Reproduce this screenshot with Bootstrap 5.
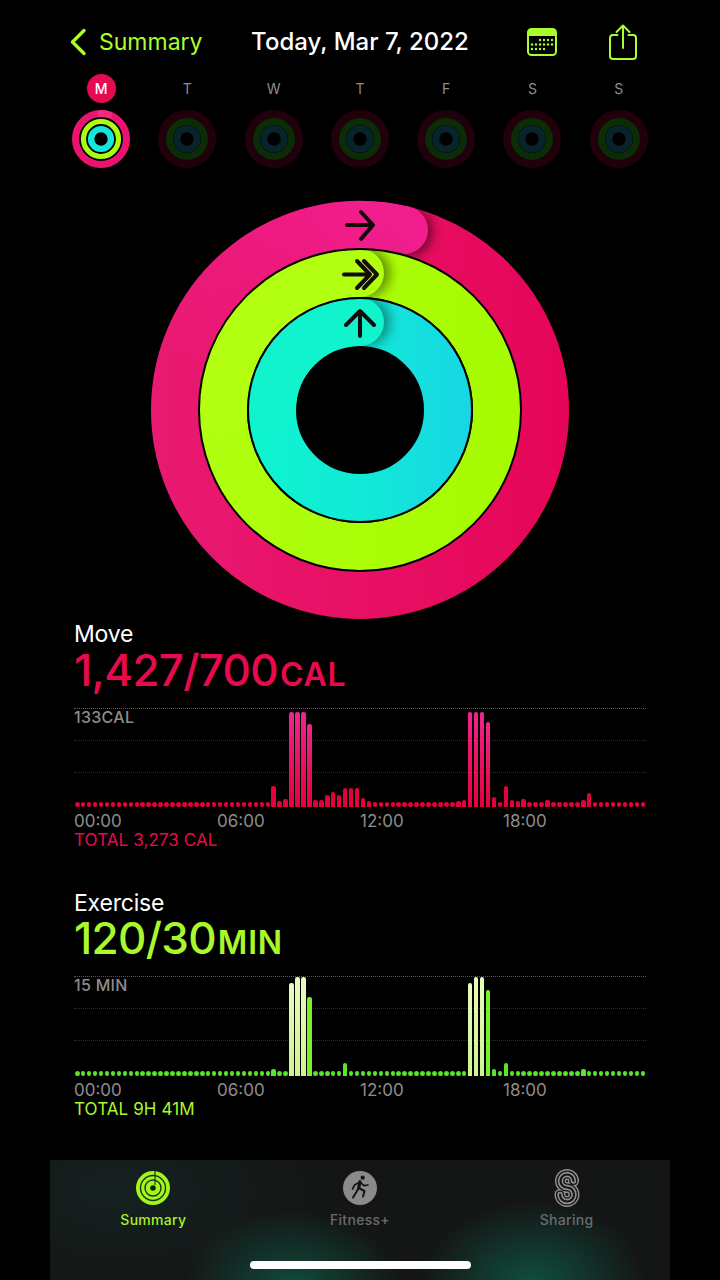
<!DOCTYPE html>
<html lang="en">
<head>
    <meta charset="UTF-8">
    <meta name="viewport" content="width=device-width, initial-scale=1.0">
    <title>Activity</title>
    <link href="https://cdn.jsdelivr.net/npm/bootstrap@5.3.0/dist/css/bootstrap.min.css" rel="stylesheet">
    <style>
        html, body { background: #000; }
        body {
            width: 720px;
            height: 1280px;
            overflow: hidden;
            font-family: Inter, "Liberation Sans", sans-serif;
            color: #fff;
        }
        .screen { height: 1280px; }

        .hdr { height: 44px; margin-top: 20px; padding: 0 69px; }
        .hdr-side { flex: 1 1 0; }
        .hdr-right { gap: 52px; }
        .share-icon { margin-right: 14px; }
        .back-text { font-size: 23px; color: #aaff2a; margin-left: 12px; }
        .hdr-title { font-size: 24px; font-weight: 500; white-space: nowrap; }

        .week { padding: 0 58px; margin-top: 10px; height: 96px; }
        .day-col { width: 86.28px; }
        .day-letter {
            width: 29px; height: 29px; line-height: 29px;
            font-size: 14px; color: #8e8e8e; text-align: center;
            border-radius: 50%;
        }
        .day-letter.today { background: #e60b50; color: #fff; font-weight: 500; }
        .day-ring { margin-top: 6px; }

        .rings-wrap { margin-top: 30px; height: 420px; }

        .stat { padding-left: 74px; }
        .stat-name { font-size: 23px; line-height: 28px; letter-spacing: -.2px; }
        .stat-value { font-size: 44px; font-weight: 500; line-height: 44px; letter-spacing: -.7px; white-space: nowrap; }
        .stat-unit { font-size: 32px; font-weight: 600; letter-spacing: .8px; margin-left: 2px; }
        .move-color { color: #e8094f; }
        .ex-color { color: #a9f82b; }
        .ex-block { margin-top: 40px; }
        .ex-block .stat-name { line-height: 26px; }
        .ex-block .axis { margin-top: 4px; }

        .plot { position: relative; width: 572px; height: 100px; margin-top: 11px; }
        .grid-line { position: absolute; left: 0; right: 0; border-top: 1px dotted #2e2e2e; }
        .grid-line.first { top: 0; border-top-color: #555; }
        .grid-line.second { top: 32px; }
        .grid-line.third { top: 64px; }
        .plot-max { position: absolute; left: 0; top: 0; font-size: 16px; font-weight: 500; line-height: 18px; letter-spacing: .3px; color: #8d8d8d; }
        .bars { position: absolute; inset: 0 0 0 1px; }
        .move-bars { bottom: 1px; }
        .bar { width: 4.500px; border-radius: 2.250px 2.250px 0 0; }
        .bar.dot { border-radius: 50%; height: 5px; }
        .move-bars .bar { background: #e5003c; }
        .move-bars .bar.tall { background: linear-gradient(to top, #e5003c, #f0248e); }
        .ex-bars .bar { background: #55e82a; }
        .ex-bars .bar.tall { background: linear-gradient(to top, #cdf58c, #eafbc0); }
        .ex-bars .bar.bright { background: #78f02a; }

        .axis { width: 572px; font-size: 17px; line-height: 20px; color: #8d8d8d; margin-top: 3px; }
        .stat-total { font-size: 17px; line-height: 19px; letter-spacing: .1px; }

        .tabbar {
            width: 620px;
            height: 120px;
            margin: auto 50px 0;
            background:
                radial-gradient(ellipse 110px 75px at 243px 125px, rgba(14, 90, 70, .78), transparent),
                radial-gradient(ellipse 115px 85px at 483px 125px, rgba(14, 90, 70, .85), transparent),
                radial-gradient(ellipse 220px 110px at 70px 30px, #15211f, transparent),
                #141515;
        }
        .tab-item { padding-top: 11px; }
        .tab-text { font-size: 14px; font-weight: 500; line-height: 18px; letter-spacing: .3px; margin-top: 6px; color: #696c6c; }
        .tab-text.on { color: #a6f02a; }
        .s-icon { margin: -2px 0; }
        .home-bar { width: 221px; height: 8px; border-radius: 4px; background: #fff; margin: 32px auto 0; }
    </style>
</head>
<body>
    <!-- shared day ring -->
    <svg width="0" height="0" class="d-block">
        <defs>
            <symbol id="dayOn" viewBox="-30 -30 60 60">
                <circle r="25" fill="none" stroke="#ea1470" stroke-width="8"/>
                <path d="M0-25A25 25 0 0 1 7-24" fill="none" stroke="#f5287f" stroke-width="8" stroke-linecap="round"/>
                <circle r="17.5" fill="none" stroke="#aaff0e" stroke-width="7"/>
                <circle r="10.2" fill="none" stroke="#14e6dc" stroke-width="7"/>
                <circle r="21" fill="none" stroke="#000" stroke-width="1.800"/>
                <circle r="14" fill="none" stroke="#000" stroke-width="1.800"/>
            </symbol>
            <symbol id="dayOff" viewBox="-30 -30 60 60">
                <circle r="25" fill="none" stroke="#20000b" stroke-width="8"/>
                <circle r="17.5" fill="none" stroke="#0c2c07" stroke-width="7"/>
                <circle r="10.2" fill="none" stroke="#08242b" stroke-width="7"/>
            </symbol>
            <path id="sharePath" d="M23.500 12A6.500 6.500 0 1 0 17 18.500A7 7 0 1 1 10 25.500" fill="none" stroke-linecap="round"/>
        </defs>
    </svg>

    <div class="screen d-flex flex-column">
        <div class="hdr d-flex align-items-center">
            <div class="hdr-side d-flex align-items-center">
                <svg width="18" height="28" viewBox="0 0 18 28"><path d="M15 2.500 3.500 14 15 25.500" fill="none" stroke="#aaff2a" stroke-width="3.400" stroke-linecap="round" stroke-linejoin="round"/></svg>
                <span class="back-text">Summary</span>
            </div>
            <div class="hdr-title">Today, Mar 7, 2022</div>
            <div class="hdr-side hdr-right d-flex align-items-center justify-content-end">
                <svg width="30" height="28" viewBox="0 0 30 28">
                    <rect x="1" y="1" width="28" height="26" rx="3.5" fill="none" stroke="#aaff2a" stroke-width="2"/>
                    <path d="M1 8V4.500A3.500 3.500 0 0 1 4.500 1h21A3.500 3.500 0 0 1 29 4.500V8Z" fill="#aaff2a"/>
                    <g fill="#aaff2a">
                        <circle cx="13" cy="12" r="1.200"/><circle cx="17" cy="12" r="1.200"/><circle cx="21" cy="12" r="1.200"/><circle cx="25" cy="12" r="1.200"/>
                        <circle cx="5" cy="16.500" r="1.200"/><circle cx="9" cy="16.500" r="1.200"/><circle cx="13" cy="16.500" r="1.200"/><circle cx="17" cy="16.500" r="1.200"/><circle cx="21" cy="16.500" r="1.200"/><circle cx="25" cy="16.500" r="1.200"/>
                        <circle cx="5" cy="21" r="1.200"/><circle cx="9" cy="21" r="1.200"/><circle cx="13" cy="21" r="1.200"/><circle cx="17" cy="21" r="1.200"/>
                    </g>
                </svg>
                <svg class="share-icon" width="28" height="36" viewBox="0 0 28 36">
                    <path d="M8.500 11H4a3 3 0 0 0-3 3v18a3 3 0 0 0 3 3h20a3 3 0 0 0 3-3V14a3 3 0 0 0-3-3h-4.500" fill="none" stroke="#aaff2a" stroke-width="2" stroke-linecap="round"/>
                    <path d="M14 24V2M7.500 8 14 1.500 20.500 8" fill="none" stroke="#aaff2a" stroke-width="2" stroke-linecap="round" stroke-linejoin="round"/>
                </svg>
            </div>
        </div>

        <div class="week d-flex">
            <div class="day-col d-flex flex-column align-items-center"><div class="day-letter today">M</div><svg class="day-ring" width="60" height="60"><use href="#dayOn"/></svg></div>
            <div class="day-col d-flex flex-column align-items-center"><div class="day-letter">T</div><svg class="day-ring" width="60" height="60"><use href="#dayOff"/></svg></div>
            <div class="day-col d-flex flex-column align-items-center"><div class="day-letter">W</div><svg class="day-ring" width="60" height="60"><use href="#dayOff"/></svg></div>
            <div class="day-col d-flex flex-column align-items-center"><div class="day-letter">T</div><svg class="day-ring" width="60" height="60"><use href="#dayOff"/></svg></div>
            <div class="day-col d-flex flex-column align-items-center"><div class="day-letter">F</div><svg class="day-ring" width="60" height="60"><use href="#dayOff"/></svg></div>
            <div class="day-col d-flex flex-column align-items-center"><div class="day-letter">S</div><svg class="day-ring" width="60" height="60"><use href="#dayOff"/></svg></div>
            <div class="day-col d-flex flex-column align-items-center"><div class="day-letter">S</div><svg class="day-ring" width="60" height="60"><use href="#dayOff"/></svg></div>
        </div>

        <div class="rings-wrap">
            <svg class="d-block mx-auto" width="420" height="420" viewBox="0 0 420 420">
                <defs>
                    <linearGradient id="moveBase" gradientUnits="userSpaceOnUse" x1="0" y1="210" x2="420" y2="210">
                        <stop offset="0" stop-color="#e91a72"/><stop offset=".6" stop-color="#e70e62"/><stop offset="1" stop-color="#e50558"/>
                    </linearGradient>
                    <linearGradient id="moveHead" gradientUnits="userSpaceOnUse" x1="60" y1="200" x2="250" y2="30">
                        <stop offset="0" stop-color="#f21e8e" stop-opacity="0"/><stop offset="1" stop-color="#f21e8e"/>
                    </linearGradient>
                    <linearGradient id="exBase" gradientUnits="userSpaceOnUse" x1="50" y1="210" x2="370" y2="210">
                        <stop offset="0" stop-color="#b0ff10"/><stop offset="1" stop-color="#a6fb00"/>
                    </linearGradient>
                    <linearGradient id="standBase" gradientUnits="userSpaceOnUse" x1="100" y1="210" x2="320" y2="210">
                        <stop offset="0" stop-color="#0ff5cf"/><stop offset=".55" stop-color="#12e8d8"/><stop offset="1" stop-color="#18d6e4"/>
                    </linearGradient>
                    <filter id="soft" x="-50%" y="-50%" width="200%" height="200%"><feGaussianBlur stdDeviation="6"/></filter>
                    <clipPath id="moveClip"><path clip-rule="evenodd" d="M1 210a209 209 0 1 0 418 0a209 209 0 1 0-418 0ZM49 210a161 161 0 1 0 322 0a161 161 0 1 0-322 0Z"/></clipPath>
                    <clipPath id="exClip"><path clip-rule="evenodd" d="M49 210a161 161 0 1 0 322 0a161 161 0 1 0-322 0ZM98 210a112 112 0 1 0 224 0a112 112 0 1 0-224 0Z"/></clipPath>
                    <clipPath id="standClip"><path clip-rule="evenodd" d="M98 210a112 112 0 1 0 224 0a112 112 0 1 0-224 0ZM146 210a64 64 0 1 0 128 0a64 64 0 1 0-128 0Z"/></clipPath>
                </defs>

                <circle cx="210" cy="210" r="185" fill="none" stroke="url(#moveBase)" stroke-width="48"/>
                <g clip-path="url(#moveClip)"><circle cx="258" cy="32" r="24" fill="#000" opacity=".55" filter="url(#soft)"/></g>
                <path d="M25 210A185 185 0 0 1 254 30" fill="none" stroke="url(#moveHead)" stroke-width="48" stroke-linecap="round"/>

                <circle cx="210" cy="210" r="137" fill="none" stroke="url(#exBase)" stroke-width="48"/>
                <g clip-path="url(#exClip)"><circle cx="216" cy="73" r="24" fill="#000" opacity=".45" filter="url(#soft)"/></g>
                <path d="M73 210A137 137 0 0 1 210 73" fill="none" stroke="#b2ff12" stroke-width="48" stroke-linecap="round"/>

                <circle cx="210" cy="210" r="88" fill="none" stroke="url(#standBase)" stroke-width="48"/>
                <g clip-path="url(#standClip)"><circle cx="216" cy="122" r="24" fill="#000" opacity=".4" filter="url(#soft)"/></g>
                <path d="M122 210A88 88 0 0 1 210 122" fill="none" stroke="#10f3cd" stroke-width="48" stroke-linecap="round"/>

                <circle cx="210" cy="210" r="161" fill="none" stroke="#000" stroke-width="2"/>
                <circle cx="210" cy="210" r="112" fill="none" stroke="#000" stroke-width="2"/>

                <g fill="none" stroke="#140a0c" stroke-width="4" stroke-linecap="round" stroke-linejoin="round">
                    <path d="M197 25H222M211 12 223 25 211 39"/>
                    <path d="M194 74.500H216M207 61 220 74.500 207 88M214 61 227 74.500 214 88"/>
                    <path d="M210 136V112M196 125 210 111 224 125"/>
                </g>
            </svg>
        </div>

        <div class="stat">
            <div class="stat-name">Move</div>
            <div class="stat-value move-color">1,427/700<span class="stat-unit">CAL</span></div>
            <div class="plot">
                <div class="grid-line first"></div><div class="grid-line second"></div><div class="grid-line third"></div>
                <div class="bars move-bars d-flex align-items-end justify-content-between"></div>
                <div class="plot-max">133CAL</div>
            </div>
            <div class="axis row g-0"><div class="col-3">00:00</div><div class="col-3">06:00</div><div class="col-3">12:00</div><div class="col-3">18:00</div></div>
            <div class="stat-total move-color">TOTAL 3,273 CAL</div>
        </div>

        <div class="stat ex-block">
            <div class="stat-name">Exercise</div>
            <div class="stat-value ex-color">120/30<span class="stat-unit">MIN</span></div>
            <div class="plot">
                <div class="grid-line first"></div><div class="grid-line second"></div><div class="grid-line third"></div>
                <div class="bars ex-bars d-flex align-items-end justify-content-between"></div>
                <div class="plot-max">15 MIN</div>
            </div>
            <div class="axis row g-0"><div class="col-3">00:00</div><div class="col-3">06:00</div><div class="col-3">12:00</div><div class="col-3">18:00</div></div>
            <div class="stat-total ex-color">TOTAL 9H 41M</div>
        </div>

        <div class="tabbar">
            <div class="row g-0">
                <div class="col-4 tab-item d-flex flex-column align-items-center">
                    <svg width="34" height="34" viewBox="0 0 34 34">
                        <circle cx="17" cy="17" r="17" fill="#a3f51f"/>
                        <circle cx="17" cy="17" r="12.500" fill="none" stroke="#1c3a10" stroke-width="1.400"/>
                        <circle cx="17" cy="17" r="8" fill="none" stroke="#1c3a10" stroke-width="1.400"/>
                        <circle cx="17" cy="17" r="2.800" fill="#12230c"/>
                        <path d="M19 0V14" stroke="#1c3a10" stroke-width="1.200"/>
                    </svg>
                    <div class="tab-text on">Summary</div>
                </div>
                <div class="col-4 tab-item d-flex flex-column align-items-center">
                    <svg width="34" height="34" viewBox="0 0 34 34">
                        <circle cx="17" cy="17" r="17" fill="#8a8a8a"/>
                        <circle cx="19.700" cy="6.700" r="2.100" fill="#141414"/>
                        <g fill="none" stroke="#141414" stroke-linecap="round" stroke-linejoin="round">
                            <path d="M17 10.700 15.700 17" stroke-width="3.200"/>
                            <path d="M17 11 21 14.700 25 14M17 11 11.600 14 9.500 18" stroke-width="1.700"/>
                            <path d="M15.700 17 21.500 20 20 25.500M15.700 17 13.400 21 10 26.500" stroke-width="2"/>
                        </g>
                    </svg>
                    <div class="tab-text">Fitness+</div>
                </div>
                <div class="col-4 tab-item d-flex flex-column align-items-center">
                    <svg width="34" height="38" viewBox="0 0 34 38" class="s-icon">
                        <use href="#sharePath" stroke="#8f8f8f" stroke-width="11"/>
                        <use href="#sharePath" stroke="#151616" stroke-width="8.200"/>
                        <use href="#sharePath" stroke="#8f8f8f" stroke-width="5.500"/>
                        <use href="#sharePath" stroke="#151616" stroke-width="2.200"/>
                    </svg>
                    <div class="tab-text">Sharing</div>
                </div>
            </div>
            <div class="home-bar"></div>
        </div>
    </div>

    <script>
        const BAR_COUNT = 96;
        const moveData = {33:21,34:6,35:8,36:95,37:95,38:95,39:83,40:7,41:7,42:12,43:15,44:12,45:19,46:19,47:19,48:9,49:6,64:6,65:7,66:95,67:95,68:95,69:85,70:10,72:21,73:7,74:6,75:8,79:7,85:7,86:14};
        const exData = {33:7,36:93,37:99,38:99,39:79,45:13,66:93,67:99,68:99,69:86,70:7,72:13,85:7};

        function fillBars(selector, data, bright) {
            const box = document.querySelector(selector);
            for (let i = 0; i < BAR_COUNT; i++) {
                const bar = document.createElement('div');
                bar.className = 'bar';
                const h = data[i];
                if (!h) {
                    bar.classList.add('dot');
                } else {
                    bar.style.height = h + 'px';
                    if (bright && bright.includes(i)) bar.classList.add('bright');
                    else if (h > 50) bar.classList.add('tall');
                }
                box.appendChild(bar);
            }
        }
        fillBars('.move-bars', moveData);
        fillBars('.ex-bars', exData, [39, 69]);
    </script>
    <script src="https://cdn.jsdelivr.net/npm/bootstrap@5.3.0/dist/js/bootstrap.bundle.min.js"></script>
</body>
</html>
